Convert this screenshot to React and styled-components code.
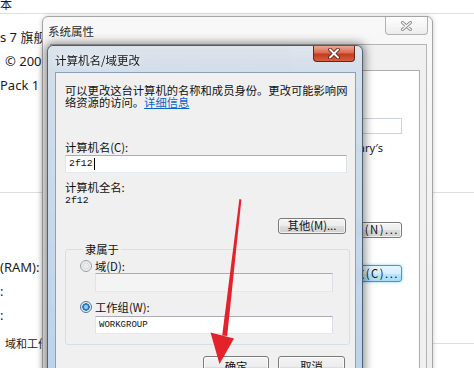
import React from "react";
import styled, { createGlobalStyle } from "styled-components";

const CJK = `"Noto Sans CJK SC", "Noto Sans", sans-serif`;
const LATIN = `"Noto Sans", "Noto Sans CJK SC", sans-serif`;
const MONO = `"Liberation Mono", "DejaVu Sans Mono", monospace`;

const GlobalStyle = createGlobalStyle`
  html, body { margin: 0; padding: 0; background: #fff; }
  body { font-family: ${CJK}; color: #1b1b1b; }
`;

const Desktop = styled.div`
  position: relative;
  width: 474px;
  height: 368px;
  overflow: hidden;
  background: #fff;
`;

/* ---------- control panel page in the back ---------- */

const Page = styled.div`
  display: flex;
  flex-direction: column;
  width: 474px;
  height: 368px;
`;

const PageTop = styled.div`
  height: 13px;
  border-bottom: 1px solid #dedede;
  font: 12px/8px ${CJK};
  overflow: hidden;
`;

const InfoBlock = styled.div`
  display: flex;
  flex-direction: column;
  padding-top: 11px;
  height: 167px;
`;

const InfoLine = styled.div`
  height: 24px;
  line-height: 24px;
  font-family: ${LATIN};
  font-size: 13px;
  padding-left: ${(p) => p.$indent || 0}px;
  white-space: nowrap;
`;

const Rule = styled.div`
  flex: 1;
  min-width: 0;
  border-top: 1px solid #dedede;
`;

const FullRule = styled.div`
  height: 0;
  border-top: 1px solid #dedede;
`;

const RamBlock = styled.div`
  display: flex;
  flex-direction: column;
  padding-top: 62px;
`;

const HeaderRow = styled.div`
  display: flex;
  align-items: center;
  gap: 6px;
  height: 24px;
  padding-left: 5px;
  margin-top: 4px;
  font: 11px/24px ${CJK};
  white-space: nowrap;
`;

/* ---------- 系统属性 (inactive window) ---------- */

const OuterWindow = styled.div`
  position: absolute;
  left: 42px;
  top: 16px;
  width: 391px;
  height: 372px;
  box-sizing: border-box;
  border: 1px solid #a4a4a4;
  border-radius: 6px 6px 0 0;
  background: linear-gradient(#f8f8f8, #eeeeee);
  box-shadow: 0 0 5px rgba(0, 0, 0, 0.2);
  display: flex;
  flex-direction: column;
`;

const OuterTitleBar = styled.div`
  height: 27px;
  display: flex;
  justify-content: space-between;
  align-items: flex-start;
  padding-left: 5px;
`;

const OuterTitle = styled.span`
  font: 11.5px/29px ${CJK};
  color: #2a2a2a;
`;

const PlainClose = styled.div`
  width: 43px;
  height: 18px;
  margin-right: 4px;
  box-sizing: border-box;
  border: 1px solid #b2b2b2;
  border-top: none;
  border-radius: 0 0 4px 4px;
  background: linear-gradient(#fefefe, #ededed);
  display: flex;
  align-items: center;
  justify-content: center;
`;

const OuterClient = styled.div`
  flex: 1;
  margin: 0 5px 0 7px;
  border: 1px solid #b4b4b4;
  border-bottom: none;
  background: #f0f0f0;
  display: flex;
  flex-direction: column;
  padding-right: 6px;
`;

const TabStrip = styled.div`
  height: 25px;
  display: flex;
  align-items: flex-end;
  padding-left: 6px;
`;

/* tab shapes only: their captions sit under the glass title bar and read as blur */
const Tab = styled.div`
  width: ${(p) => p.$w}px;
  height: 19px;
  margin-right: -1px;
  border: 1px solid #8d9199;
  border-bottom: none;
  border-radius: 2px 2px 0 0;
  background: ${(p) => (p.$active ? "#fff" : "linear-gradient(#f2f2f2, #dcdcdc)")};
`;

const TabPanel = styled.div`
  flex: 1;
  background: #fff;
  border: 1px solid #adadad;
  display: flex;
  flex-direction: column;
  align-items: flex-end;
  padding: 47px 17px 0 0;
`;

const DescBox = styled.div`
  width: 230px;
  height: 16px;
  border: 1px solid #cdd2d8;
  box-sizing: border-box;
`;

const HintText = styled.div`
  margin: 7px 19px 0 0;
  font: 11px/14px ${LATIN};
  white-space: nowrap;
`;

const Button = styled.div`
  width: ${(p) => p.$w}px;
  height: ${(p) => p.$h || 16}px;
  box-sizing: border-box;
  border: 1px solid ${(p) => (p.$hot ? "#3c9bd3" : "#7a7a7a")};
  border-radius: 3px;
  background: ${(p) =>
    p.$hot
      ? "linear-gradient(#e6f5fd 0%, #d5eefc 50%, #bde5fb 51%, #a9dbf6 100%)"
      : "linear-gradient(#f4f4f4 0%, #ececec 50%, #dedede 51%, #d0d0d0 100%)"};
  box-shadow: ${(p) => (p.$hot ? "0 0 3px #7fc9f0" : "inset 0 0 0 1px rgba(255,255,255,0.7)")};
  display: flex;
  align-items: center;
  justify-content: ${(p) => (p.$end ? "flex-end" : "center")};
  padding-right: ${(p) => (p.$end ? 2 : 0)}px;
  letter-spacing: ${(p) => (p.$end ? 1.5 : 0)}px;
  font: 11.3px/1 ${CJK};
  color: #111;
  white-space: nowrap;
  margin-top: ${(p) => p.$mt || 0}px;
`;

/* ---------- 计算机名/域更改 (active dialog) ---------- */

const InnerWindow = styled.div`
  position: absolute;
  left: 47px;
  top: 45px;
  width: 316px;
  height: 340px;
  box-sizing: border-box;
  border: 1px solid rgba(40, 56, 74, 0.75);
  border-radius: 6px 6px 0 0;
  background: linear-gradient(
    180deg,
    rgba(220, 227, 235, 0.9) 0,
    rgba(208, 220, 233, 0.92) 26px,
    rgba(184, 209, 236, 0.96) 100%
  );
  backdrop-filter: blur(5px);
  box-shadow: 0 0 10px 2px rgba(0, 0, 0, 0.45);
  display: flex;
  flex-direction: column;
`;

const InnerTitleBar = styled.div`
  height: 26px;
  display: flex;
  justify-content: space-between;
  align-items: flex-start;
  padding-left: 7px;
`;

const InnerTitle = styled.span`
  font: 11.5px/29px ${CJK};
  color: #151515;
  text-shadow: 0 0 6px rgba(255, 255, 255, 0.95);
`;

const RedClose = styled.div`
  width: 42px;
  height: 16px;
  margin-right: 7px;
  box-sizing: border-box;
  border: 1px solid #6b2317;
  border-top: none;
  border-radius: 0 0 4px 4px;
  background: linear-gradient(#eaa897 0%, #d9694f 45%, #c23a20 55%, #d7603f 100%);
  display: flex;
  align-items: center;
  justify-content: center;
`;

const Client = styled.div`
  flex: 1;
  margin: 0 6px 0 7px;
  border: 1px solid #8aa1ba;
  border-bottom: none;
  background: #f0f0f0;
  padding: 11px 8px 0 9px;
  display: flex;
  flex-direction: column;
`;

const Intro = styled.p`
  margin: 0 -8px 0 0;
  font: 11.3px/12px ${CJK};
  color: #111;
`;

const Link = styled.span`
  color: #0a64c8;
  text-decoration: underline;
`;

const Label = styled.div`
  margin-top: ${(p) => p.$mt || 0}px;
  font: 11.3px/14px ${CJK};
  color: #111;
`;

const Value = styled.div`
  font: 9.8px/13px ${MONO};
  color: #111;
`;

const TextBox = styled.div`
  height: ${(p) => p.$h}px;
  margin-top: ${(p) => p.$mt || 0}px;
  margin-left: ${(p) => p.$ml || 0}px;
  box-sizing: border-box;
  border: 1px solid #abadb3;
  border-color: #abadb3 #dbdfe6 #e3e9ef #e2e3ea;
  background: ${(p) => (p.$disabled ? "#f4f4f4" : "#fff")};
  display: flex;
  align-items: center;
  padding-left: 3px;
  font: ${(p) => p.$fs || 9.8}px/1 ${MONO};
  color: #111;
`;

const Caret = styled.span`
  display: inline-block;
  width: 1px;
  height: 12px;
  margin-left: 1px;
  background: #000;
`;

const Group = styled.fieldset`
  margin: 9px -3px 0 0;
  padding: 4px 16px 10px 14px;
  border: 1px solid #d5dfe5;
  border-radius: 3px;
  display: flex;
  flex-direction: column;
`;

const Legend = styled.legend`
  margin-left: 3px;
  padding: 0 2px;
  font: 11.3px/12px ${CJK};
  color: #111;
`;

const RadioRow = styled.div`
  display: flex;
  align-items: center;
  gap: 3px;
  height: 14px;
  margin-top: ${(p) => p.$mt || 0}px;
  font: 11.3px/14px ${CJK};
  color: #111;
`;

const Radio = styled.span`
  width: 12px;
  height: 12px;
  box-sizing: border-box;
  border-radius: 50%;
  border: 1px solid ${(p) => (p.$checked ? "#55779b" : "#9aa0a6")};
  background: ${(p) =>
    p.$checked
      ? "radial-gradient(circle, #8fd0f6 0 1.5px, #2f77c4 2.5px 3.5px, #e9eef3 4px)"
      : "radial-gradient(circle, #ececec 0 2px, #dcdcdc 3px, #f6f6f6 5px)"};
`;

const ButtonRow = styled.div`
  display: flex;
  justify-content: flex-end;
  gap: 9px;
  margin: ${(p) => p.$mt ?? 11}px ${(p) => p.$mr ?? 2}px 0 0;
`;

const Overlay = styled.svg`
  position: absolute;
  left: 0;
  top: 0;
  pointer-events: none;
`;

function CloseGlyph({ red }) {
  return red ? (
    <svg width="14" height="11" viewBox="0 0 14 11">
      <path
        d="M3 1.5 L11 9.5 M11 1.5 L3 9.5"
        stroke="#5a1a10"
        strokeWidth="3.6"
        strokeLinecap="round"
      />
      <path
        d="M3 1.5 L11 9.5 M11 1.5 L3 9.5"
        stroke="#fff"
        strokeWidth="2"
        strokeLinecap="round"
      />
    </svg>
  ) : (
    <svg width="13" height="10" viewBox="0 0 13 10">
      <path
        d="M2.5 1.5 L10.5 8.5 M10.5 1.5 L2.5 8.5"
        stroke="#8a8a8a"
        strokeWidth="3"
        strokeLinecap="round"
      />
      <path
        d="M2.5 1.5 L10.5 8.5 M10.5 1.5 L2.5 8.5"
        stroke="#f4f4f4"
        strokeWidth="1.4"
        strokeLinecap="round"
      />
    </svg>
  );
}

export default function App() {
  return (
    <Desktop>
      <GlobalStyle />

      <Page>
        <PageTop>本</PageTop>
        <InfoBlock>
          <InfoLine>s 7 旗舰</InfoLine>
          <InfoLine $indent={5}>© 2009</InfoLine>
          <InfoLine>Pack 1</InfoLine>
        </InfoBlock>
        <FullRule />
        <RamBlock>
          <InfoLine>(RAM):</InfoLine>
          <InfoLine>:</InfoLine>
          <InfoLine>:</InfoLine>
        </RamBlock>
        <HeaderRow>
          域和工作组设置
          <Rule />
        </HeaderRow>
      </Page>

      <OuterWindow>
        <OuterTitleBar>
          <OuterTitle>系统属性</OuterTitle>
          <PlainClose>
            <CloseGlyph />
          </PlainClose>
        </OuterTitleBar>
        <OuterClient>
          <TabStrip>
            <Tab $w={58} $active />
            <Tab $w={36} />
            <Tab $w={36} />
            <Tab $w={58} />
            <Tab $w={36} />
          </TabStrip>
          <TabPanel>
            <DescBox />
            <HintText>"Mary′s</HintText>
            <Button $w={92} $mt={67} $end>
              ID(N)...
            </Button>
            <Button $w={92} $h={17} $mt={27} $hot $end>
              更改(C)...
            </Button>
          </TabPanel>
        </OuterClient>
      </OuterWindow>

      <InnerWindow>
        <InnerTitleBar>
          <InnerTitle>计算机名/域更改</InnerTitle>
          <RedClose>
            <CloseGlyph red />
          </RedClose>
        </InnerTitleBar>
        <Client>
          <Intro>
            可以更改这台计算机的名称和成员身份。更改可能影响网络资源的访问。<Link>详细信息</Link>
          </Intro>

          <Label $mt={32}>计算机名(C):</Label>
          <TextBox $h={18} $mt={1}>
            2f12
            <Caret />
          </TextBox>

          <Label $mt={7}>计算机全名:</Label>
          <Value>2f12</Value>

          <ButtonRow $mt={11} $mr={1}>
            <Button $w={68}>其他(M)...</Button>
          </ButtonRow>

          <Group>
            <Legend>隶属于</Legend>
            <RadioRow>
              <Radio />
              域(D):
            </RadioRow>
            <TextBox $h={19} $ml={15} $disabled />
            <RadioRow $mt={8}>
              <Radio $checked />
              工作组(W):
            </RadioRow>
            <TextBox $h={18} $mt={2} $ml={15} $fs={9}>
              WORKGROUP
            </TextBox>
          </Group>

          <ButtonRow>
            <Button $w={66} $h={22}>确定</Button>
            <Button $w={67} $h={22}>取消</Button>
          </ButtonRow>
        </Client>
      </InnerWindow>

      <Overlay width="474" height="368" viewBox="0 0 474 368">
        <polygon
          points="239.4,199 241.4,199.5 227.2,336 222.2,335.5"
          fill="#e3222b"
        />
        <polygon points="210.5,332.5 234,338.5 219.5,364" fill="#e3222b" />
      </Overlay>
    </Desktop>
  );
}
